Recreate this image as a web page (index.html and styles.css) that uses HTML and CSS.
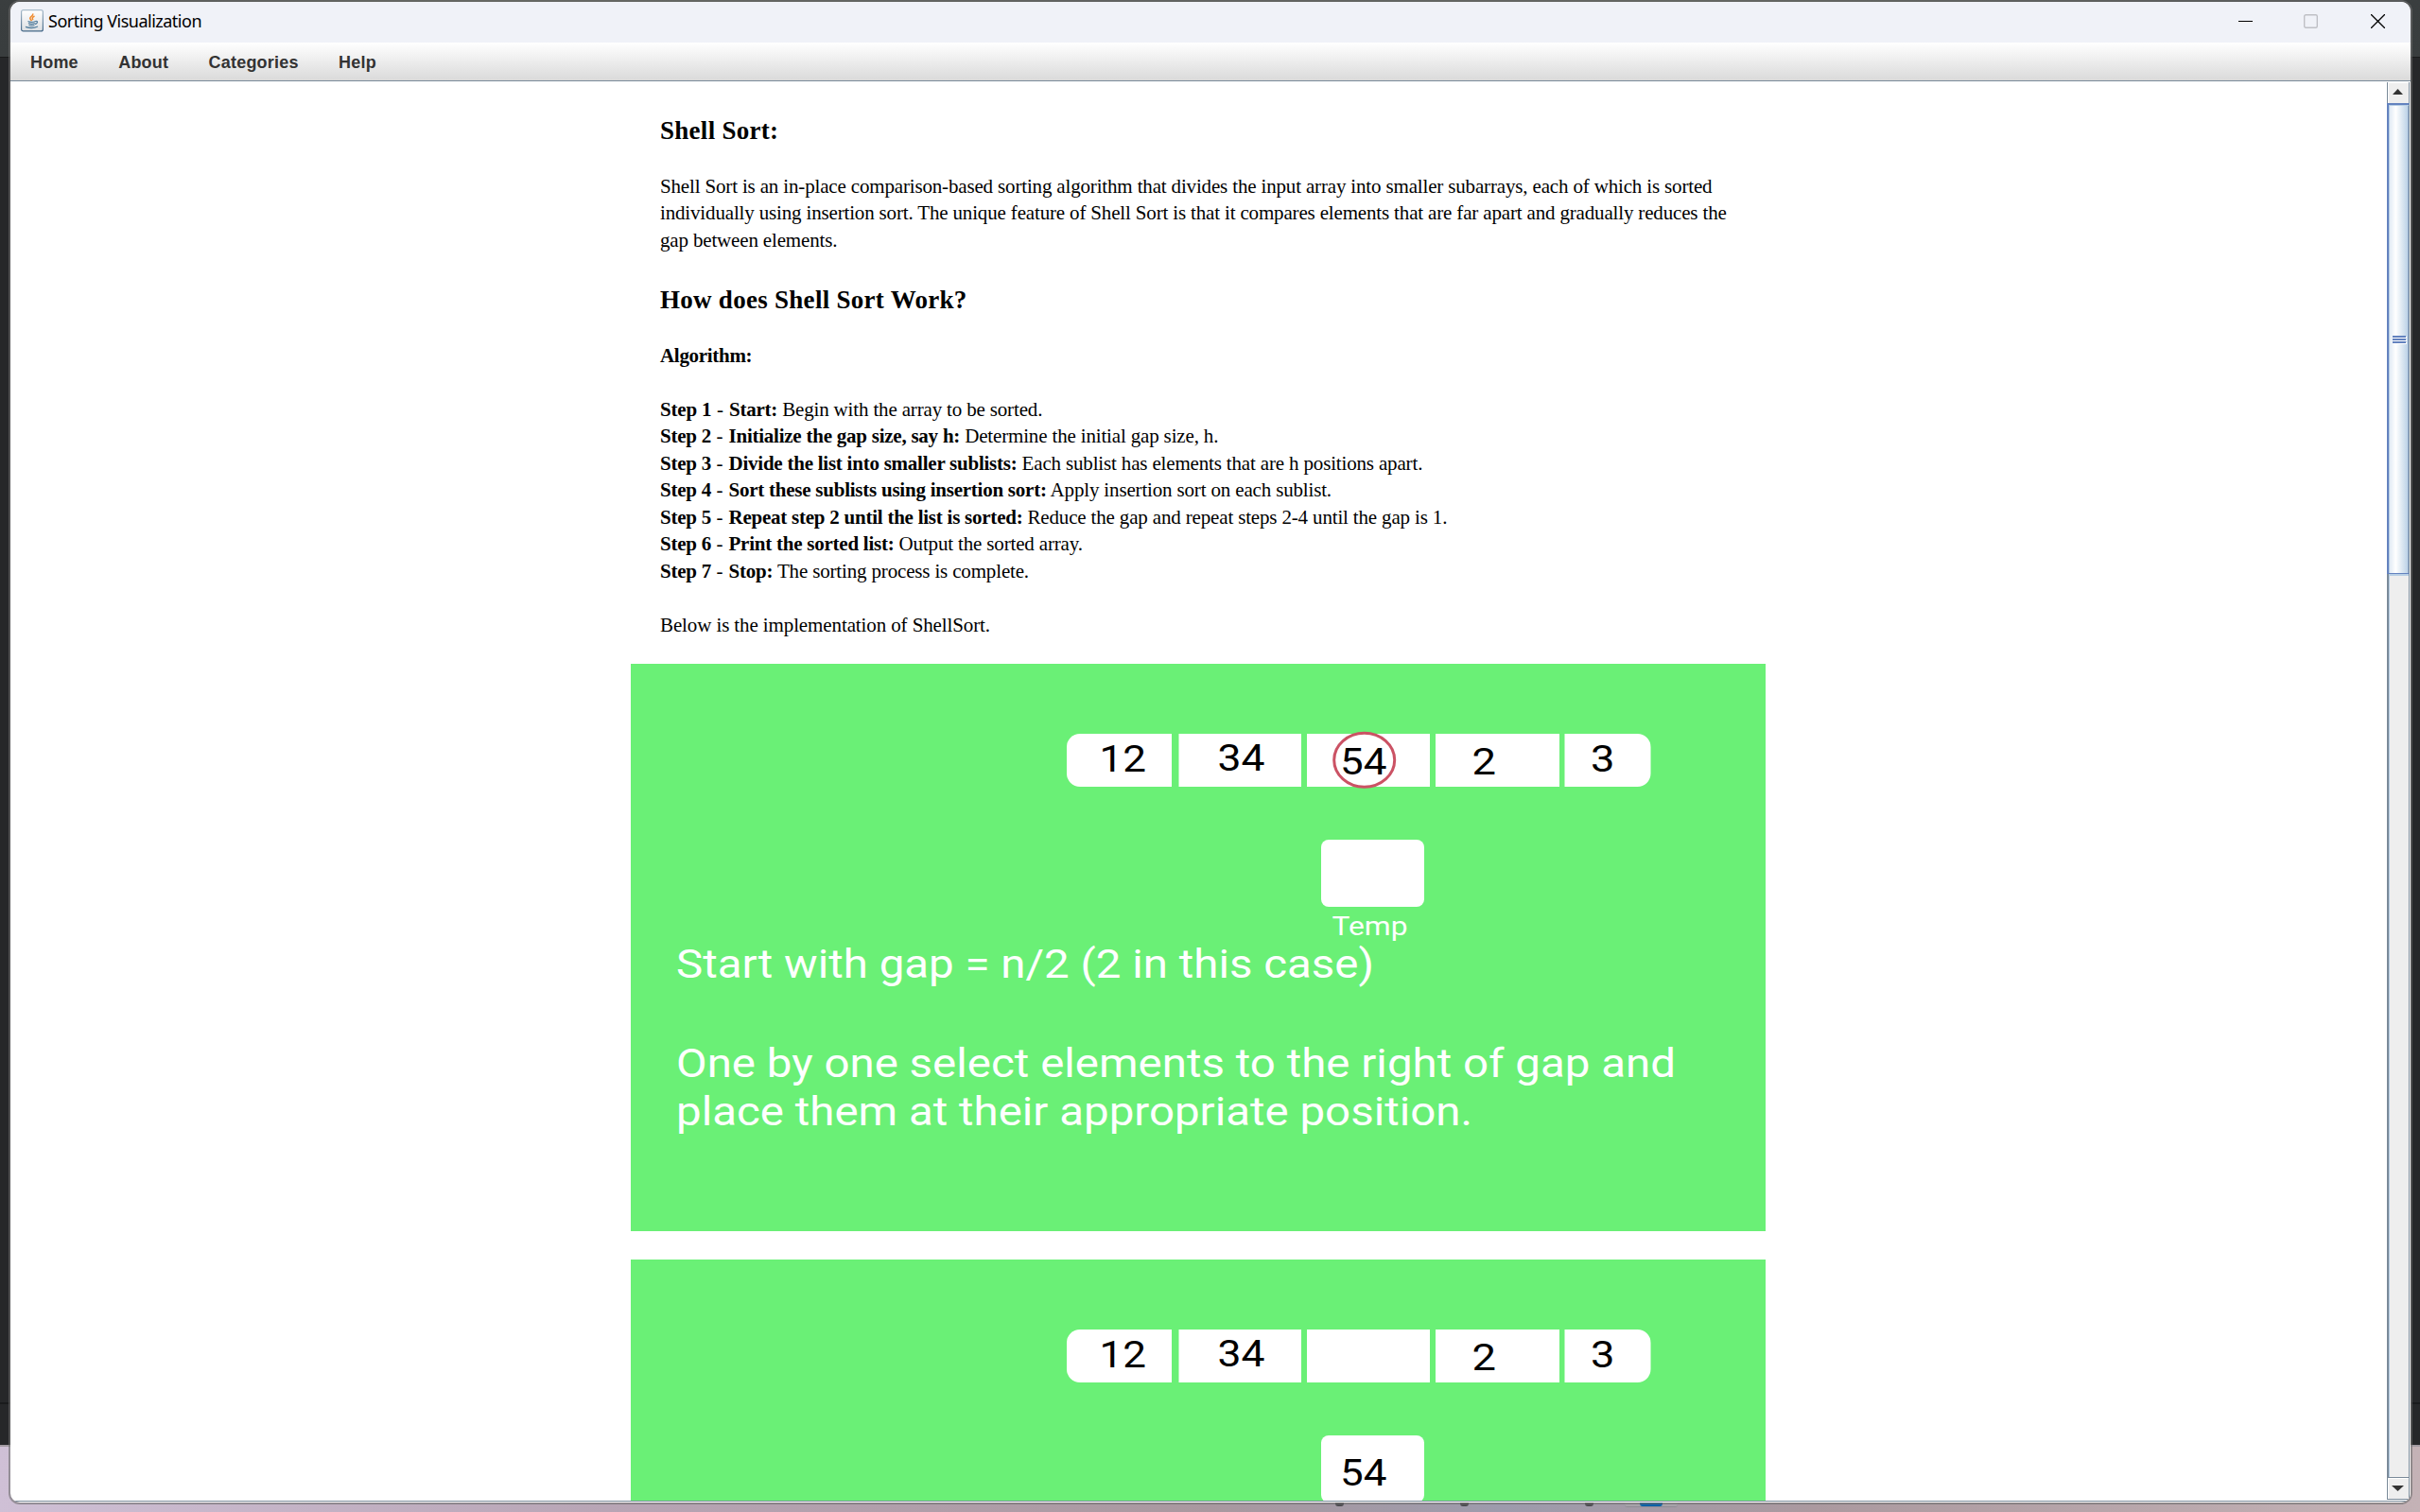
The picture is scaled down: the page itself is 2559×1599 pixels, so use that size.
FILE: index.html
```html
<!DOCTYPE html>
<html lang="en">
<head>
<meta charset="utf-8">
<title>Sorting Visualization</title>
<link rel="stylesheet" href="styles.css">
</head>
<body>
<div class="desktop">
  <div class="taskbar">
    <i class="dot dot-1"></i><i class="dot dot-2"></i><i class="dot dot-3"></i><i class="active-tile"></i><i class="active-app"></i>
  </div>
  <div class="window">
    <header class="titlebar">
      <svg class="java-icon" width="24" height="24" viewBox="0 0 24 24">
        <defs><linearGradient id="jg" x1="0" y1="0" x2="0" y2="1"><stop offset="0" stop-color="#fff"/><stop offset="1" stop-color="#dcdfe2"/></linearGradient><linearGradient id="jb" x1="0" y1="0" x2="0" y2="1"><stop offset="0" stop-color="#a9bccb"/><stop offset="1" stop-color="#446888"/></linearGradient></defs>
        <rect x=".6" y=".6" width="22.8" height="22.3" rx="2" fill="url(#jg)" stroke="url(#jb)" stroke-width="1.2"/>
        <path d="M12.5 4.5c1.500 2-4 3.500-2.500 5.500l1.500 2M14.500 7c-3 1.500-2.500 2.500-1.500 4" fill="none" stroke="#f08a2c" stroke-width="1.500"/>
        <path d="M7.500 12.500c2 1 5.500 1 8 0M8 14.500c2 1 5 1 7 0M8.500 16.500c2 .8 4 .8 6 0M15.500 12.500c3-1 2.500 2.500-.5 3M5 18.300c4 1.500 9.500 1.300 13-.3" fill="none" stroke="#56809f" stroke-width="1.300"/>
      </svg>
      <span class="title">Sorting Visualization</span>
      <div class="controls">
        <svg width="15" height="15" viewBox="0 0 15 15"><path d="M0 7.500h15" stroke="#000"/></svg>
        <svg width="15" height="15" viewBox="0 0 15 15"><rect x=".7" y=".7" width="13.6" height="13.6" rx="1.500" fill="none" stroke="#bfc0c5" stroke-width="1.400"/></svg>
        <svg width="15" height="15" viewBox="0 0 15 15"><path d="M0 0l15 15M15 0L0 15" stroke="#000" stroke-width="1.300"/></svg>
      </div>
    </header>
    <nav class="menubar"><span>Home</span><span>About</span><span>Categories</span><span>Help</span></nav>
    <div class="scrollpane">
      <main class="viewport">
        <article class="text">
          <h1>Shell Sort:</h1>
          <p>Shell Sort is an in-place comparison-based sorting algorithm that divides the input array into smaller subarrays, each of which is sorted<br>individually using insertion sort. The unique feature of Shell Sort is that it compares elements that are far apart and gradually reduces the<br>gap between elements.</p>
          <h1>How does Shell Sort Work?</h1>
          <p class="label"><b>Algorithm:</b></p>
          <p class="steps"><b>Step 1</b><span> - </span><b>Start:</b> Begin with the array to be sorted.<br>
          <b>Step 2</b><span> - </span><b>Initialize the gap size, say h:</b> Determine the initial gap size, h.<br>
          <b>Step 3</b><span> - </span><b>Divide the list into smaller sublists:</b> Each sublist has elements that are h positions apart.<br>
          <b>Step 4</b><span> - </span><b>Sort these sublists using insertion sort:</b> Apply insertion sort on each sublist.<br>
          <b>Step 5</b><span> - </span><b>Repeat step 2 until the list is sorted:</b> Reduce the gap and repeat steps 2-4 until the gap is 1.<br>
          <b>Step 6</b><span> - </span><b>Print the sorted list:</b> Output the sorted array.<br>
          <b>Step 7</b><span> - </span><b>Stop:</b> The sorting process is complete.</p>
          <p class="closing">Below is the implementation of ShellSort.</p>
        </article>
        <svg class="slide" width="1200" height="600" viewBox="0 0 1200 600">
          <rect width="1200" height="600" fill="#6af076"/>
          <g fill="#fff">
            <path d="M572 74v56H475a14 14 0 0 1-14-14V88a14 14 0 0 1 14-14z"/>
            <rect x="579.500" y="74" width="129.500" height="56"/>
            <rect x="715" y="74" width="130" height="56"/>
            <rect x="851" y="74" width="131" height="56"/>
            <path d="M987.500 74v56h77a14 14 0 0 0 14-14V88a14 14 0 0 0-14-14z"/>
            <rect x="730" y="186" width="109" height="71" rx="8"/>
          </g>
          <ellipse cx="775.700" cy="101.700" rx="32" ry="28.500" fill="none" stroke="#cb5264" stroke-width="3"/>
          <g class="num">
            <text x="495.500" y="114" textLength="49.500" lengthAdjust="spacingAndGlyphs">12</text>
            <text x="620.500" y="112.700" textLength="50" lengthAdjust="spacingAndGlyphs">34</text>
            <text x="750" y="116.500" textLength="49.500" lengthAdjust="spacingAndGlyphs">54</text>
            <text x="889.500" y="116.500" textLength="25.500" lengthAdjust="spacingAndGlyphs">2</text>
            <text x="1015" y="114" textLength="25.500" lengthAdjust="spacingAndGlyphs">3</text>
          </g>
          <text class="temp" x="741.500" y="286.700" textLength="80" lengthAdjust="spacingAndGlyphs">Temp</text>
          <g class="caption">
            <text x="48" y="331.500" textLength="738" lengthAdjust="spacingAndGlyphs">Start with gap = n/2 (2 in this case)</text>
            <text x="48" y="437" textLength="1057" lengthAdjust="spacingAndGlyphs">One by one select elements to the right of gap and</text>
            <text x="48" y="487.500" textLength="842" lengthAdjust="spacingAndGlyphs">place them at their appropriate position.</text>
          </g>
        </svg>
        <svg class="slide" width="1200" height="600" viewBox="0 0 1200 600">
          <rect width="1200" height="600" fill="#6af076"/>
          <g fill="#fff">
            <path d="M572 74v56H475a14 14 0 0 1-14-14V88a14 14 0 0 1 14-14z"/>
            <rect x="579.500" y="74" width="129.500" height="56"/>
            <rect x="715" y="74" width="130" height="56"/>
            <rect x="851" y="74" width="131" height="56"/>
            <path d="M987.500 74v56h77a14 14 0 0 0 14-14V88a14 14 0 0 0-14-14z"/>
            <rect x="730" y="186" width="109" height="71" rx="8"/>
          </g>
          <g class="num">
            <text x="495.500" y="114" textLength="49.500" lengthAdjust="spacingAndGlyphs">12</text>
            <text x="620.500" y="112.700" textLength="50" lengthAdjust="spacingAndGlyphs">34</text>
            <text x="750" y="239" textLength="49.500" lengthAdjust="spacingAndGlyphs">54</text>
            <text x="889.500" y="116.500" textLength="25.500" lengthAdjust="spacingAndGlyphs">2</text>
            <text x="1015" y="114" textLength="25.500" lengthAdjust="spacingAndGlyphs">3</text>
          </g>
        </svg>
      </main>
      <aside class="scrollbar">
        <div class="btn btn-up"><svg width="11" height="6" viewBox="0 0 11 6"><path d="M5.500 0L11 6H0z" fill="#333"/></svg></div>
        <div class="thumb"><div class="grip"><i></i><i></i><i></i></div></div>
        <div class="track"></div>
        <div class="btn btn-down"><svg width="13" height="6" viewBox="0 0 13 6"><path d="M6.500 6L13 0H0z" fill="#333"/></svg></div>
      </aside>
    </div>
  </div>
</div>
</body>
</html>
```
FILE: styles.css
```css
* { box-sizing: border-box; }
body { margin: 0; overflow: hidden; background: #27282a; }
.desktop {
  position: relative;
  width: 2559px;
  height: 1599px;
  padding: 2px 10px 10px 11px;
  background:
    linear-gradient(90deg, #3a3e3f 0, #5a6054 20%, #4e524e 45%, #565c52 70%, #3a3e3f 100%) 0 0 / 100% 2px no-repeat,
    linear-gradient(#1a1b1c, #1a1b1c) 0 60px / 100% 1px no-repeat,
    linear-gradient(#3a3e3f, #393d3e) 0 0 / 100% 60px no-repeat,
    linear-gradient(#1a1b1c, #1a1b1c) 0 1483px / 100% 2px no-repeat,
    #262729;
}
.taskbar {
  position: absolute;
  left: 0;
  right: 0;
  top: 1528px;
  bottom: 0;
  border-top: 2px solid #a39ba2;
  background: linear-gradient(90deg, #cfc0d6 0, #b8a5b5 25%, #a9989f 50%, #9d9bac 62%, #ab999f 75%, #c4b2b6 100%);
}
.dot, .active-app, .active-tile { position: absolute; top: 58px; height: 5px; background: #4e4d52; border-radius: 0 0 3px 3px; }
.dot { width: 9px; }
.dot-1 { left: 1412px; }
.dot-2 { left: 1544px; }
.dot-3 { left: 1676px; }
.active-tile { left: 1718px; width: 56px; height: 6px; background: #a7a2aa; border-bottom: 1px solid #8f8b94; }
.active-app { left: 1734px; width: 24px; background: #0560a8; }
.window {
  position: relative;
  height: 1587px;
  display: flex;
  flex-direction: column;
  background: #fff;
  border-radius: 10px;
  box-shadow: 0 0 0 2px rgba(110, 110, 110, .6);
  overflow: hidden;
}
.titlebar {
  flex: 0 0 43px;
  display: flex;
  align-items: center;
  gap: 5px;
  padding: 0 27px 3px 11px;
  background: #f0f2f8;
}
.title { font: 18px/24px "Noto Sans", sans-serif; color: #000; letter-spacing: -.5px; }
.controls { margin-left: auto; display: flex; gap: 54px; }
.controls svg:last-child { margin-left: 2px; }
.menubar {
  flex: 0 0 41px;
  min-height: 0;
  display: flex;
  gap: 42.4px;
  padding: 0 21px;
  font: bold 18px/42px "Liberation Sans", Arial, sans-serif;
  letter-spacing: .2px;
  color: #333;
  background: linear-gradient(#fff, #dadada);
  border-bottom: 1px solid #7a8a99;
}
.menubar span { height: 40px; }
.scrollpane { flex: 1; min-height: 0; display: flex; border-bottom: 1px solid #7a8a99; margin-bottom: 1px; }
.viewport { flex: 1; min-width: 0; padding-left: 656px; overflow: hidden; }
.text {
  height: 616px;
  padding: 31.5px 0 0 31px;
  font: 21px/28.5px "Liberation Serif", "Times New Roman", serif;
  letter-spacing: -.16px;
  color: #000;
  white-space: nowrap;
}
.text h1 { margin: 0 0 27px; padding-top: 2px; font-size: 27px; line-height: 36px; letter-spacing: .28px; }
.text p { margin: 0 0 28.5px; }
.text .label { letter-spacing: -.3px; }
.steps b { letter-spacing: -.24px; }
.steps span { letter-spacing: .35px; }
.steps b:first-child { letter-spacing: -.16px; }
.text .closing { letter-spacing: -.11px; }
.slide { display: block; margin-bottom: 30px; }
.num { font: 39px Roboto, sans-serif; fill: #000; }
.temp { font: 27.3px Roboto, sans-serif; fill: #fff; }
.caption { font: 42px Roboto, sans-serif; fill: #fff; }
.scrollbar {
  flex: 0 0 25px;
  display: flex;
  flex-direction: column;
  padding-top: 1px;
  margin-bottom: 1px;
  border-right: 1px solid #fff;
}
.btn {
  display: flex;
  align-items: center;
  justify-content: center;
  border-left: 1px solid #7a8a99;
  border-right: 1px solid #7a8a99;
  background: #eee;
  box-shadow: inset 1px 1px #fff;
}
.btn svg { margin-right: 2px; }
.btn-up { height: 22px; padding-bottom: 2px; }
.btn-down { height: 23px; border-bottom: 1px solid #7a8a99; }
.thumb {
  height: 498px;
  padding: 244px 0 0 4px;
  border: solid #6382bf;
  border-width: 2px 0 1px 2px;
  border-right: 1px solid #7a8a99;
  background: linear-gradient(90deg, #dde8f3 0, #fff 35%, #b8cfe5 100%);
  box-shadow: inset 1px 1px #b8cfe5, inset -1px 0 #90a9ca;
}
.grip { width: 14px; display: grid; gap: 1px; }
.grip i { height: 2px; background: #6382bf; box-shadow: 1px 1px #fff; }
.track {
  flex: 1;
  border: solid #7a8a99;
  border-width: 0 1px 1px 2px;
  background: #eee;
  box-shadow: inset 1px 2px #b8cfe5;
}
```
